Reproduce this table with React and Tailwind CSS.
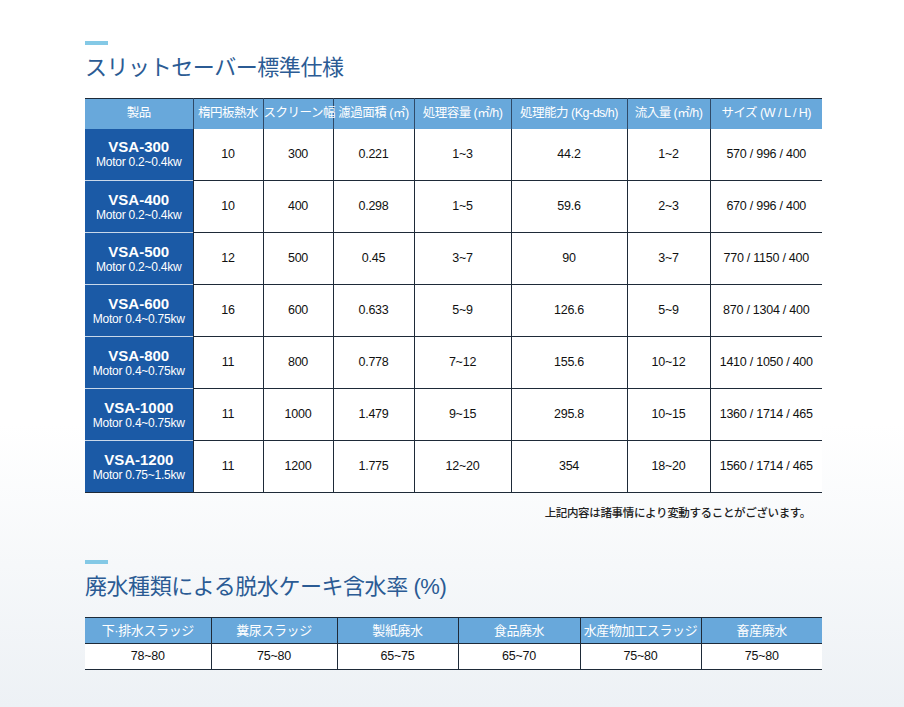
import React from 'react';

const specHeaders = ['製品', '楕円板熱水', 'スクリーン幅', '濾過面積 (㎡)', '処理容量 (㎡/h)', '処理能力 (Kg-ds/h)', '流入量 (㎡/h)', 'サイズ (W / L / H)'];
const specWidths = ['w-[108px]', 'w-[70px]', 'w-[70px]', 'w-[81px]', 'w-[97px]', 'w-[116px]', 'w-[83px]', 'w-[112px]'];

const specRows = [
  ['VSA-300', 'Motor 0.2~0.4kw', '10', '300', '0.221', '1~3', '44.2', '1~2', '570 / 996 / 400'],
  ['VSA-400', 'Motor 0.2~0.4kw', '10', '400', '0.298', '1~5', '59.6', '2~3', '670 / 996 / 400'],
  ['VSA-500', 'Motor 0.2~0.4kw', '12', '500', '0.45', '3~7', '90', '3~7', '770 / 1150 / 400'],
  ['VSA-600', 'Motor 0.4~0.75kw', '16', '600', '0.633', '5~9', '126.6', '5~9', '870 / 1304 / 400'],
  ['VSA-800', 'Motor 0.4~0.75kw', '11', '800', '0.778', '7~12', '155.6', '10~12', '1410 / 1050 / 400'],
  ['VSA-1000', 'Motor 0.4~0.75kw', '11', '1000', '1.479', '9~15', '295.8', '10~15', '1360 / 1714 / 465'],
  ['VSA-1200', 'Motor 0.75~1.5kw', '11', '1200', '1.775', '12~20', '354', '18~20', '1560 / 1714 / 465'],
];

const waterHeaders = ['下·排水スラッジ', '糞尿スラッジ', '製紙廃水', '食品廃水', '水産物加工スラッジ', '畜産廃水'];
const waterValues = ['78~80', '75~80', '65~75', '65~70', '75~80', '75~80'];
const waterWidths = ['w-[126px]', 'w-[126px]', 'w-[121px]', 'w-[122px]', 'w-[121px]', 'w-[121px]'];

function SectionTitle({ children }) {
  return (
    <div>
      <div className="h-[4px] w-[23px] bg-[#84c9e6]" />
      <h2 className="mt-[8px] text-[22px] leading-[30px] text-[#2b5b94] tracking-[-0.02em]">{children}</h2>
    </div>
  );
}

export default function App() {
  return (
    <div className="min-h-[707px] w-full bg-gradient-to-b from-white from-60% to-[#edf1f5] font-['Liberation_Sans','Noto_Sans_CJK_JP',sans-serif]">
      <div className="ml-[85px] w-[737px] pt-[41px] pb-[30px]">
        <SectionTitle>スリットセーバー標準仕様</SectionTitle>

        <table className="mt-[15px] w-[737px] table-fixed border-collapse border-t-[1.5px] border-b border-[#1e2a38]">
          <thead>
            <tr className="h-[30px] bg-[#68a8db]">
              {specHeaders.map((h, i) => (
                <th
                  key={h}
                  className={`${specWidths[i]} p-0 text-[12.5px] font-normal text-white whitespace-nowrap tracking-[-0.04em] ${i > 0 ? 'border-l border-[#2f4a68]' : ''}`}
                >
                  {h}
                </th>
              ))}
            </tr>
          </thead>
          <tbody>
            {specRows.map((r, ri) => (
              <tr key={r[0]} className="h-[52px]">
                <td className={`bg-[#1b5aa6] text-center text-white p-0 ${ri > 0 ? 'border-t border-[#c9d8ea]' : ''}`}>
                  <div className="text-[15px] leading-[17px] font-semibold">{r[0]}</div>
                  <div className="text-[12px] leading-[15px] tracking-[-0.02em]">{r[1]}</div>
                </td>
                {r.slice(2).map((c, ci) => (
                  <td
                    key={ci}
                    className={`bg-white p-0 text-center text-[12.5px] text-[#111] border-l border-[#1e2a38] whitespace-nowrap tracking-[-0.02em] ${ri > 0 ? 'border-t' : ''}`}
                  >
                    {c}
                  </td>
                ))}
              </tr>
            ))}
          </tbody>
        </table>

        <p className="mt-[12px] pr-[11px] text-right text-[11.5px] leading-[16px] font-medium text-[#222] tracking-[-0.03em]">
          上記内容は諸事情により変動することがございます。
        </p>

        <div className="mt-[39px]">
          <SectionTitle>廃水種類による脱水ケーキ含水率 (%)</SectionTitle>
        </div>

        <table className="mt-[15px] w-[737px] table-fixed border-collapse border-t-[1.5px] border-b border-[#1e2a38]">
          <thead>
            <tr className="h-[26px] bg-[#68a8db]">
              {waterHeaders.map((h, i) => (
                <th
                  key={h}
                  className={`${waterWidths[i]} p-0 text-[13px] font-normal text-white whitespace-nowrap tracking-[-0.03em] border-b border-[#1e2a38] ${i > 0 ? 'border-l' : ''}`}
                >
                  {h}
                </th>
              ))}
            </tr>
          </thead>
          <tbody>
            <tr className="h-[26px] bg-white">
              {waterValues.map((v, i) => (
                <td
                  key={i}
                  className={`p-0 text-center text-[12.5px] text-[#111] tracking-[-0.02em] ${i > 0 ? 'border-l border-[#1e2a38]' : ''}`}
                >
                  {v}
                </td>
              ))}
            </tr>
          </tbody>
        </table>
      </div>
    </div>
  );
}
